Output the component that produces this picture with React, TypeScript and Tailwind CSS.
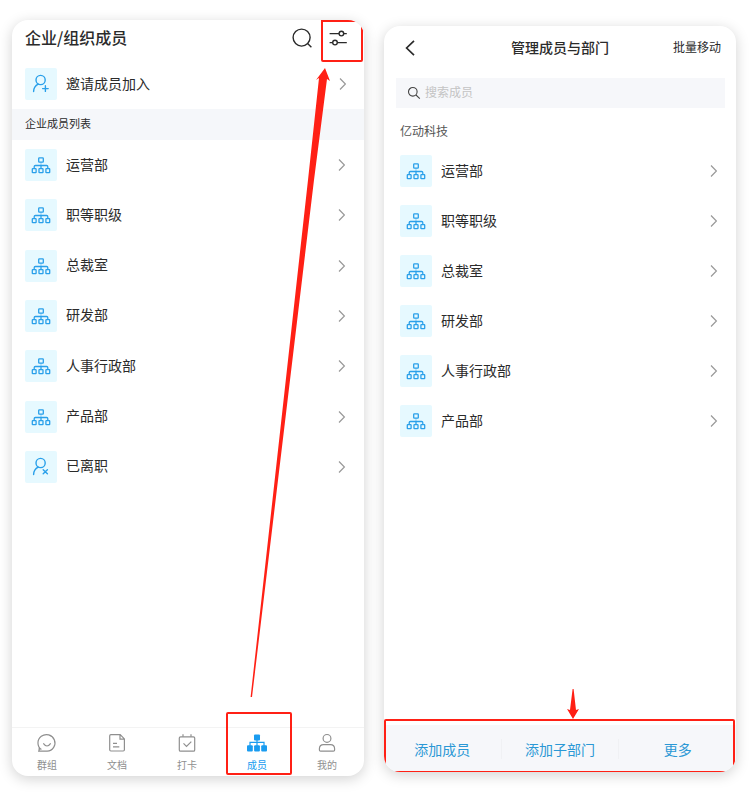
import React from "react";

const leftDepartments = ["运营部", "职等职级", "总裁室", "研发部", "人事行政部", "产品部"];
const rightDepartments = ["运营部", "职等职级", "总裁室", "研发部", "人事行政部", "产品部"];

function OrgIcon() {
  return (
    <svg viewBox="0 0 20 20" className="size-5" fill="none" stroke="currentColor" strokeWidth="1.3" aria-hidden="true">
      <rect x="7.7" y="2.9" width="4.6" height="4.2" rx="0.6" />
      <path d="M10 10.4v3M3.2 13.6v-1.9q0-1.2 1.2-1.2h11.2q1.2 0 1.2 1.2v1.9" />
      <path d="M10 7.1v3.4" strokeOpacity="0.35" />
      <rect x="1.3" y="13.7" width="3.8" height="4" rx="0.5" />
      <rect x="8" y="13.7" width="4" height="4" rx="0.5" />
      <rect x="14.9" y="13.7" width="3.8" height="4" rx="0.5" />
    </svg>
  );
}

function PersonIcon({ mark }: { mark: "plus" | "cross" }) {
  return (
    <svg viewBox="0 0 20 20" className="size-5" fill="none" stroke="currentColor" strokeWidth="1.4" strokeLinecap="round" aria-hidden="true">
      <circle cx="9.6" cy="6" r="4.6" />
      <path d="M7.2 10.1C4.4 11.4 2.7 13.8 2.6 17.6" />
      {mark === "plus" ? <path d="M14.4 11.8v5.6M11.6 14.6h5.6" /> : <path d="M12.2 12.7l4.2 4M16.4 12.7l-4.2 4" />}
    </svg>
  );
}

function Chevron() {
  return (
    <svg viewBox="0 0 8 14" className="h-[14px] w-2 text-[#999999]" fill="none" stroke="currentColor" strokeWidth="1.2" aria-hidden="true">
      <path d="M1 1.5L6.4 7L1 12.5" />
    </svg>
  );
}

function Row({ icon, label }: { icon: React.ReactNode; label: string }) {
  return (
    <button type="button" className="flex min-h-[50px] w-full flex-1 items-center text-left text-sm">
      <span className="flex size-8 shrink-0 items-center justify-center rounded-xs bg-[#e6f9ff] text-[#2aa0ea]">{icon}</span>
      <span className="ml-[9px] flex-1 pb-[3px]">{label}</span>
      <Chevron />
    </button>
  );
}

const tabs: { label: string; icon: React.ReactNode; active?: boolean }[] = [
  {
    label: "群组",
    icon: (
      <>
        <path d="M4.4 16.6A8.5 8.3 0 1 1 10.2 18.2H1.8Q2.4 17 2.2 14.2" />
        <path d="M6.3 10.4q3.7 5.2 7.4 0" />
      </>
    ),
  },
  {
    label: "文档",
    icon: (
      <>
        <path d="M3.9 1.7h9.3l4.2 4.2v10.9q0 1.2-1.2 1.2H3.9q-1.2 0-1.2-1.2V2.9q0-1.2 1.2-1.2zM13 1.9v4.2h4.2M6 10.3h4M6 13.8h6.3" />
      </>
    ),
  },
  {
    label: "打卡",
    icon: (
      <>
        <rect x="2.3" y="3.8" width="15.4" height="14.4" rx="1.3" />
        <path d="M6 1.2v2.6M14 1.2v2.6M6.5 10.4l3 3 4.8-4.8" />
      </>
    ),
  },
  {
    label: "成员",
    active: true,
    icon: (
      <>
        <path d="M10 7v6M3 13v-3.6h14V13" />
        <g fill="currentColor" stroke="none">
          <rect x="7" y="1.6" width="6" height="6" rx="1" />
          <rect x="0" y="12.2" width="5.8" height="6.2" rx="1" />
          <rect x="7.1" y="12.2" width="5.8" height="6.2" rx="1" />
          <rect x="14.2" y="12.2" width="5.8" height="6.2" rx="1" />
        </g>
      </>
    ),
  },
  {
    label: "我的",
    icon: (
      <>
        <circle cx="10" cy="5.4" r="3.9" />
        <path d="M2.4 17v-1.2q0-4.1 4.1-4.1h7q4.1 0 4.1 4.1V17q0 1.2-1.2 1.2H3.6q-1.2 0-1.2-1.2z" />
      </>
    ),
  },
];

const phone = "relative flex flex-1 flex-col overflow-hidden rounded-2xl bg-white shadow-[0_3px_14px_rgba(0,0,0,0.18)]";

function MembersScreen() {
  return (
    <section className={`${phone} min-h-[756px]`}>
      <header className="flex h-[38px] items-center pr-4 pl-[13px]">
        <h1 className="flex-1 pb-[5px] text-base font-medium">企业/组织成员</h1>
        <button type="button" aria-label="搜索" className="mr-4 pb-[2px]">
          <svg viewBox="0 0 20 20" className="size-5" fill="none" stroke="currentColor" strokeWidth="1.4">
            <circle cx="9.6" cy="9.6" r="8.5" />
            <path d="M15.6 15.6l3.8 3.6" />
          </svg>
        </button>
        <button type="button" aria-label="管理" className="pb-[2px]">
          <svg viewBox="0 0 20 20" className="size-5" fill="none" stroke="currentColor" strokeWidth="1.4">
            <path d="M1.6 5.6h9.4M15.8 5.6h3M1.6 14.6h3.2M9.4 14.6h9.4" />
            <circle cx="13.4" cy="5.6" r="2.3" />
            <circle cx="7" cy="14.6" r="2.3" />
          </svg>
        </button>
      </header>
      <div className="flex pt-[1px] pr-[17px] pl-[13px]">
        <Row icon={<PersonIcon mark="plus" />} label="邀请成员加入" />
      </div>
      <h2 className="flex h-[31px] items-center bg-[#f5f7fa] px-[13px] pb-[2px] text-[11px]">企业成员列表</h2>
      <div className="flex h-[352px] flex-col pr-[18px] pl-[13px]">
        {leftDepartments.map((name) => (
          <Row key={name} icon={<OrgIcon />} label={name} />
        ))}
        <Row icon={<PersonIcon mark="cross" />} label="已离职" />
      </div>
      <nav className="mt-auto flex h-[49px] border-t border-[#f3f3f3] pr-[2px]">
        {tabs.map((tab) => (
          <button
            key={tab.label}
            type="button"
            className={`flex flex-1 flex-col items-center pt-[5px] text-[10px] leading-[14px] ${tab.active ? "text-[#1a9cf0]" : "text-[#8f8f8f]"}`}
          >
            <svg viewBox="0 0 20 20" className="mb-[5px] size-5" fill="none" stroke="currentColor" strokeWidth="1.2" aria-hidden="true">
              {tab.icon}
            </svg>
            {tab.label}
          </button>
        ))}
      </nav>
      <div className="pointer-events-none absolute top-0 right-[1px] h-[42px] w-[42px] rounded-b-xs border-2 border-[#ff2015]" />
      <div className="pointer-events-none absolute right-[72px] bottom-[1px] h-[63px] w-[66px] rounded-xs border-2 border-[#ff2015]" />
      <svg viewBox="0 0 90 632" className="pointer-events-none absolute top-12 right-[26px] h-[632px] w-[90px]" fill="#ff2015" aria-hidden="true">
        <path d="M77 0L82 13L79 11L66 112L4 629H2.6L60 112L71 10L68 12Z" />
      </svg>
    </section>
  );
}

function ManageScreen() {
  return (
    <section className={`${phone} min-h-[746px]`}>
      <header className="grid h-[43px] grid-cols-[1fr_auto_1fr] items-center px-[15px]">
        <button type="button" aria-label="返回" className="justify-self-start pl-[6px]">
          <svg viewBox="0 0 10 16" className="h-4 w-[10px]" fill="none" stroke="currentColor" strokeWidth="1.7">
            <path d="M9 0.8L1.6 8L9 15.2" />
          </svg>
        </button>
        <h1 className="pb-[2px] text-sm font-medium">管理成员与部门</h1>
        <button type="button" className="justify-self-end pb-[2px] text-xs">批量移动</button>
      </header>
      <label className="mt-[9px] mr-[11px] ml-3 flex h-[30px] items-center bg-[#f6f7fa] px-[11px]">
        <svg viewBox="0 0 14 14" className="size-[14px]" fill="none" stroke="#444444" strokeWidth="1.1" aria-hidden="true">
          <circle cx="5.8" cy="5.8" r="4.3" />
          <path d="M9 9l3.8 3.6" />
        </svg>
        <input type="search" aria-label="搜索成员" placeholder="搜索成员" className="ml-[4px] min-w-0 flex-1 bg-transparent pb-[3px] text-xs outline-none placeholder:text-[#c4c4c4]" />
      </label>
      <h2 className="flex h-[38px] items-center px-4 pt-[8px] text-xs text-[#555555]">亿动科技</h2>
      <div className="flex flex-col pr-[18px] pl-4">
        {rightDepartments.map((name) => (
          <Row key={name} icon={<OrgIcon />} label={name} />
        ))}
      </div>
      <footer className="mt-auto flex h-[47px] items-center divide-x divide-[#f0f1f4] bg-[#f6f7fa] text-sm text-[#2b98d5]">
        <button type="button" className="flex-1">添加成员</button>
        <button type="button" className="flex-1">添加子部门</button>
        <button type="button" className="flex-1">更多</button>
      </footer>
      <div className="pointer-events-none absolute right-[1px] bottom-0 left-0 h-[53px] rounded-t-xs border-2 border-b border-[#ff2015]" />
      <svg viewBox="0 0 12 30" className="pointer-events-none absolute right-[157px] bottom-[53px] h-[30px] w-3" fill="#ff2015" aria-hidden="true">
        <path d="M5.6 0H6.6L9 21L12 20L6 30L0 20L3 21Z" />
      </svg>
    </section>
  );
}

export default function App() {
  return (
    <main className="flex items-start gap-5 bg-white pt-5 pr-[14px] pb-7 pl-3 font-['Noto_Sans_CJK_SC',sans-serif] text-[#2b2b2b]">
      <MembersScreen />
      <div className="flex flex-1 pt-[6px]">
        <ManageScreen />
      </div>
    </main>
  );
}
